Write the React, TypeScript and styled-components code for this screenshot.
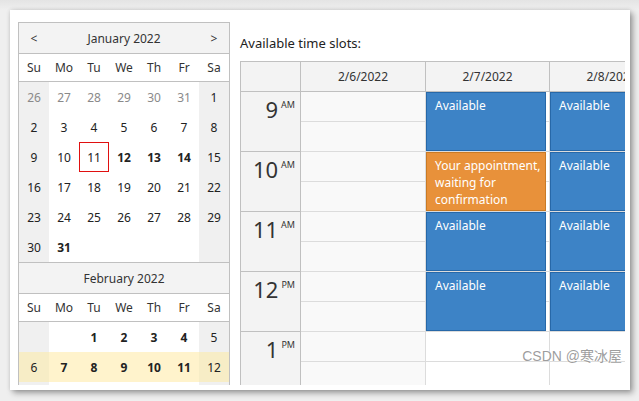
import React from "react";
import styled, { createGlobalStyle, css } from "styled-components";

const GlobalStyle = createGlobalStyle`
  html, body { margin: 0; padding: 0; background: #ededed; }
  body { font-family: "Noto Sans", "Open Sans", sans-serif; color: #333; }
  * { box-sizing: border-box; }
`;

const Frame = styled.div`
  width: 639px;
  height: 401px;
  padding: 10px 9px 11px 10px;
  background: linear-gradient(180deg, #e4e4e4 0px, #efefef 10px, #efefef 100%);
`;

const Card = styled.div`
  position: relative;
  width: 620px;
  height: 380px;
  background: #fff;
  box-shadow: 3px 3px 6px rgba(0, 0, 0, 0.35), 0 0 4px rgba(0, 0, 0, 0.12);
  padding: 12px 5px 5px 8px;
`;

const Content = styled.div`
  display: flex;
  gap: 10px;
  height: 363px;
  overflow: hidden;
`;

/* ---------- Navigator ---------- */

const Navigator = styled.div`
  width: 212px;
  flex-shrink: 0;
  border: 1px solid #c0c0c0;
  border-bottom: none;
  align-self: flex-start;
`;

const Month = styled.div`
  border-bottom: 1px solid #c0c0c0;
`;

const MonthHeader = styled.div`
  display: flex;
  align-items: center;
  justify-content: space-between;
  height: 31px;
  padding: 0 10px;
  background: #f3f3f3;
  border-bottom: 1px solid #c0c0c0;
  font-size: 12px;
  color: #333;
`;

const NavArrow = styled.span`
  width: 10px;
  text-align: center;
  font-size: 12px;
  color: #333;
`;

const MonthTitle = styled.span`
  flex: 1;
  text-align: center;
`;

const WeekRow = styled.div`
  display: grid;
  grid-template-columns: repeat(7, 30px);
`;

const DayNames = styled(WeekRow)`
  height: 28px;
  border-bottom: 1px solid #c0c0c0;
  background: #fff;
`;

const DayName = styled.div`
  display: flex;
  align-items: center;
  justify-content: center;
  font-size: 12px;
  color: #333;
`;

const DayCell = styled.div<{
  $weekend?: boolean;
  $other?: boolean;
  $bold?: boolean;
  $today?: boolean;
  $selected?: boolean;
}>`
  height: 30px;
  display: flex;
  align-items: center;
  justify-content: center;
  font-size: 12px;
  color: ${(p) => (p.$other ? "#8a8a8a" : "#222")};
  font-weight: ${(p) => (p.$bold ? 700 : 400)};
  background: ${(p) =>
    p.$selected
      ? p.$weekend
        ? "#f7edc6"
        : "#fff3cc"
      : p.$weekend
      ? "#f0f0f0"
      : "#fff"};
  ${(p) =>
    p.$today &&
    css`
      box-shadow: inset 0 0 0 1px #e01010;
    `}
`;

type Day = { n?: number; other?: boolean; bold?: boolean; today?: boolean };

const dayNames = ["Su", "Mo", "Tu", "We", "Th", "Fr", "Sa"];

const january: Day[][] = [
  [
    { n: 26, other: true },
    { n: 27, other: true },
    { n: 28, other: true },
    { n: 29, other: true },
    { n: 30, other: true },
    { n: 31, other: true },
    { n: 1 },
  ],
  [2, 3, 4, 5, 6, 7, 8].map((n) => ({ n })),
  [9, 10, 11, 12, 13, 14, 15].map((n) => ({
    n,
    today: n === 11,
    bold: n >= 12 && n <= 14,
  })),
  [16, 17, 18, 19, 20, 21, 22].map((n) => ({ n })),
  [23, 24, 25, 26, 27, 28, 29].map((n) => ({ n })),
  [{ n: 30 }, { n: 31, bold: true }, {}, {}, {}, {}, {}],
];

const february: Day[][] = [
  [{}, {}, { n: 1, bold: true }, { n: 2, bold: true }, { n: 3, bold: true }, { n: 4, bold: true }, { n: 5 }],
  [6, 7, 8, 9, 10, 11, 12].map((n) => ({ n, bold: n >= 7 && n <= 11 })),
  [13, 14, 15, 16, 17, 18, 19].map((n) => ({ n, bold: n >= 14 && n <= 18 })),
];

const MonthView: React.FC<{
  title: string;
  weeks: Day[][];
  arrows?: boolean;
  selectedWeek?: number;
}> = ({ title, weeks, arrows, selectedWeek }) => (
  <Month>
    <MonthHeader>
      <NavArrow>{arrows ? "<" : ""}</NavArrow>
      <MonthTitle>{title}</MonthTitle>
      <NavArrow>{arrows ? ">" : ""}</NavArrow>
    </MonthHeader>
    <DayNames>
      {dayNames.map((d) => (
        <DayName key={d}>{d}</DayName>
      ))}
    </DayNames>
    {weeks.map((week, wi) => (
      <WeekRow key={wi}>
        {week.map((d, di) => (
          <DayCell
            key={di}
            $weekend={di === 0 || di === 6}
            $other={d.other}
            $bold={d.bold}
            $today={d.today}
            $selected={selectedWeek === wi}
          >
            {d.n ?? ""}
          </DayCell>
        ))}
      </WeekRow>
    ))}
  </Month>
);

/* ---------- Scheduler ---------- */

const RightPanel = styled.div`
  flex: 1;
  min-width: 0;
  display: flex;
  flex-direction: column;
`;

const Caption = styled.div`
  margin-top: 12px;
  height: 18px;
  line-height: 18px;
  font-size: 13px;
  color: #222;
  margin-bottom: 9px;
`;

const Scheduler = styled.div`
  border-top: 1px solid #c0c0c0;
  border-left: 1px solid #c0c0c0;
  overflow: hidden;
  flex: 1;
`;

const HeaderRow = styled.div`
  display: flex;
  height: 30px;
  border-bottom: 1px solid #c0c0c0;
  background: #f3f3f3;
`;

const Corner = styled.div`
  width: 60px;
  flex-shrink: 0;
  border-right: 1px solid #c0c0c0;
`;

const DayHeader = styled.div<{ $first?: boolean }>`
  width: ${(p) => (p.$first ? 125 : 124)}px;
  flex-shrink: 0;
  border-right: 1px solid #c0c0c0;
  display: flex;
  align-items: center;
  justify-content: center;
  font-size: 12px;
  color: #333;
`;

const Body = styled.div`
  display: flex;
`;

const TimeColumn = styled.div`
  width: 60px;
  flex-shrink: 0;
  background: #f3f3f3;
  border-right: 1px solid #c0c0c0;
`;

const HourLabel = styled.div`
  height: 60px;
  border-bottom: 1px solid #c0c0c0;
  display: flex;
  justify-content: flex-end;
  align-items: flex-start;
  padding: 4px 5px 0 0;
  color: #333;
`;

const HourNum = styled.span`
  font-size: 22px;
  line-height: 26px;
  font-weight: 400;
`;

const HourAmPm = styled.span`
  font-size: 9px;
  line-height: 12px;
  margin-left: 3px;
  margin-top: 3px;
`;

const DayColumn = styled.div<{ $off?: boolean; $first?: boolean }>`
  position: relative;
  width: ${(p) => (p.$first ? 125 : 124)}px;
  flex-shrink: 0;
  border-right: 1px solid #dcdcdc;
  background: ${(p) => (p.$off ? "#f9f9f9" : "#fff")};
`;

const Slot = styled.div`
  height: 30px;
  border-bottom: 1px solid #dcdcdc;
`;

const Event = styled.div<{ $kind: "free" | "mine" }>`
  position: absolute;
  left: 0;
  width: 120px;
  height: 59px;
  padding: 4px 1px 4px 8px;
  font-size: 12px;
  line-height: 17px;
  color: #fff;
  background: ${(p) => (p.$kind === "mine" ? "#e8913a" : "#3d83c6")};
  border: 1px solid ${(p) => (p.$kind === "mine" ? "#c97a25" : "#2768a8")};
`;

const Watermark = styled.div`
  position: absolute;
  right: 8px;
  bottom: 25px;
  font-family: "Liberation Sans", "Noto Sans CJK SC", sans-serif;
  font-size: 14px;
  color: rgba(140, 140, 140, 0.85);
  text-shadow: 0 0 2px #fff;
`;

const hours = [
  { n: "9", p: "AM" },
  { n: "10", p: "AM" },
  { n: "11", p: "AM" },
  { n: "12", p: "PM" },
  { n: "1", p: "PM" },
];

type Ev = { hour: number; kind: "free" | "mine"; text: string };

const days: { label: string; off?: boolean; events: Ev[] }[] = [
  { label: "2/6/2022", off: true, events: [] },
  {
    label: "2/7/2022",
    events: [
      { hour: 0, kind: "free", text: "Available" },
      { hour: 1, kind: "mine", text: "Your appointment, waiting for confirmation" },
      { hour: 2, kind: "free", text: "Available" },
      { hour: 3, kind: "free", text: "Available" },
    ],
  },
  {
    label: "2/8/2022",
    events: [
      { hour: 0, kind: "free", text: "Available" },
      { hour: 1, kind: "free", text: "Available" },
      { hour: 2, kind: "free", text: "Available" },
      { hour: 3, kind: "free", text: "Available" },
    ],
  },
];

export default function App() {
  return (
    <>
      <GlobalStyle />
      <Frame>
        <Card>
          <Content>
            <Navigator>
              <MonthView title="January 2022" weeks={january} arrows />
              <MonthView title="February 2022" weeks={february} selectedWeek={1} />
            </Navigator>
            <RightPanel>
              <Caption>Available time slots:</Caption>
              <Scheduler>
                <HeaderRow>
                  <Corner />
                  {days.map((d, i) => (
                    <DayHeader key={d.label} $first={i === 0}>
                      {d.label}
                    </DayHeader>
                  ))}
                </HeaderRow>
                <Body>
                  <TimeColumn>
                    {hours.map((h) => (
                      <HourLabel key={h.n}>
                        <HourNum>{h.n}</HourNum>
                        <HourAmPm>{h.p}</HourAmPm>
                      </HourLabel>
                    ))}
                  </TimeColumn>
                  {days.map((d, i) => (
                    <DayColumn key={d.label} $off={d.off} $first={i === 0}>
                      {hours.flatMap((h) => [
                        <Slot key={h.n + "a"} />,
                        <Slot key={h.n + "b"} />,
                      ])}
                      {d.events.map((e) => (
                        <Event
                          key={e.hour}
                          $kind={e.kind}
                          style={{ top: e.hour * 60 }}
                        >
                          {e.text}
                        </Event>
                      ))}
                    </DayColumn>
                  ))}
                </Body>
              </Scheduler>
            </RightPanel>
          </Content>
          <Watermark>CSDN @寒冰屋</Watermark>
        </Card>
      </Frame>
    </>
  );
}
